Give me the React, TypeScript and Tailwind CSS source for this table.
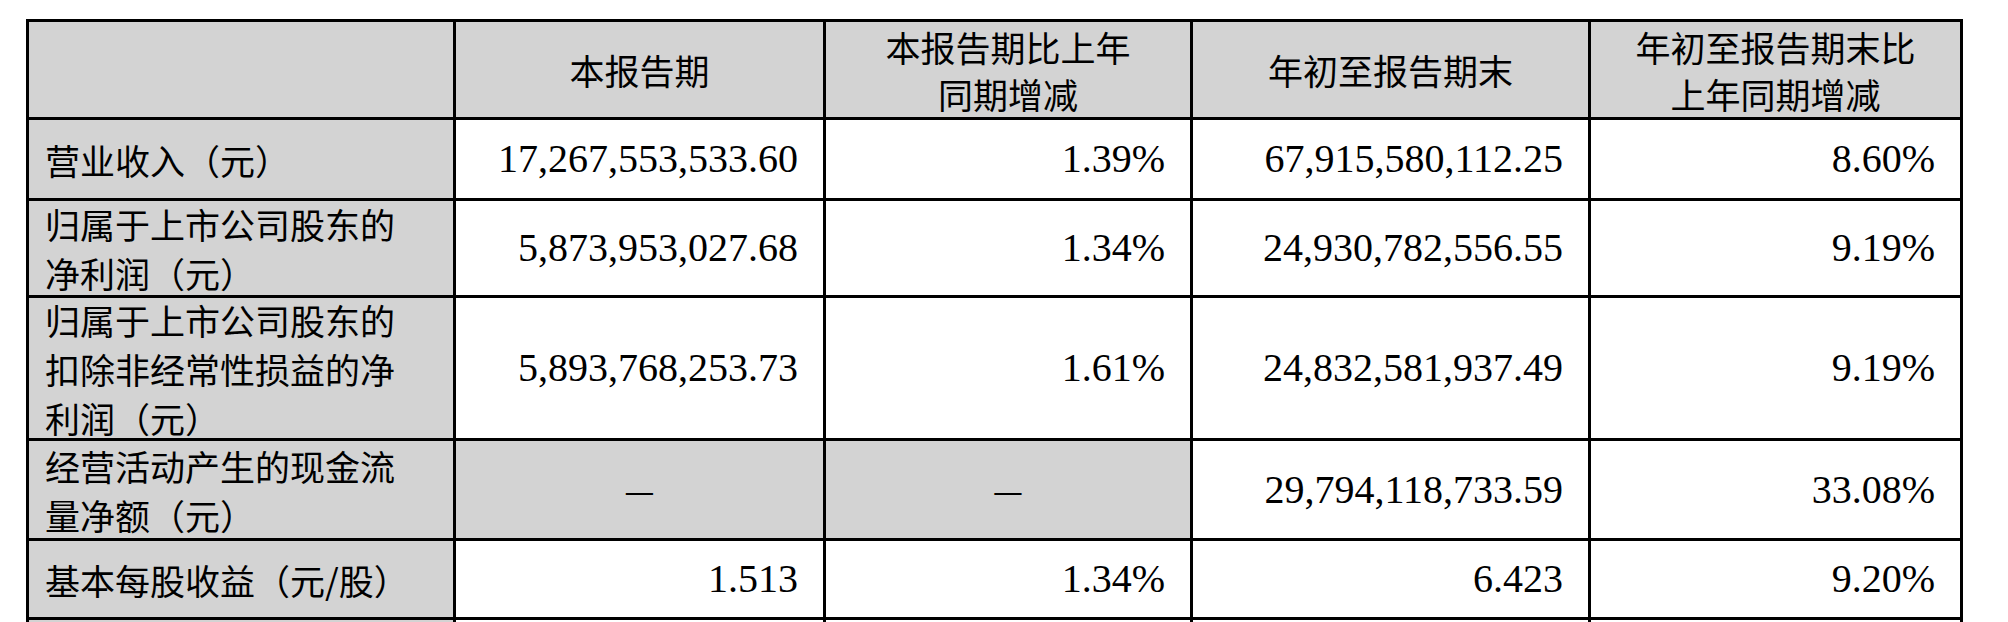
import React from 'react'

type Row = {
  label: string
  values: string[]
  grayCols?: number[]
}

const rows: Row[] = [
  { label: '营业收入（元）', values: ['17,267,553,533.60', '1.39%', '67,915,580,112.25', '8.60%'] },
  { label: '归属于上市公司股东的净利润（元）', values: ['5,873,953,027.68', '1.34%', '24,930,782,556.55', '9.19%'] },
  {
    label: '归属于上市公司股东的扣除非经常性损益的净利润（元）',
    values: ['5,893,768,253.73', '1.61%', '24,832,581,937.49', '9.19%']
  },
  {
    label: '经营活动产生的现金流量净额（元）',
    values: ['—', '—', '29,794,118,733.59', '33.08%'],
    grayCols: [0, 1]
  },
  { label: '基本每股收益（元/股）', values: ['1.513', '1.34%', '6.423', '9.20%'] }
]

const headers: React.ReactNode[] = [
  '本报告期',
  <>本报告期比上年<br />同期增减</>,
  '年初至报告期末',
  <>年初至报告期末比<br />上年同期增减</>
]

const App: React.FC = () => {
  return (
    <div className="w-[2008px] h-[622px] overflow-hidden bg-white pt-[19px] pl-[26px] text-black">
      <div className="grid w-[1937px] grid-cols-[424px_367px_364px_395px_369px] grid-rows-[95px_78px_94px_140px_97px_76px_80px] gap-[3px] border-[3px] border-black bg-black">
        {/* Header */}
        <div className="bg-[#d3d3d3]" />
        {headers.map((h, i) => (
          <div
            key={i}
            className="flex items-center justify-center bg-[#d3d3d3] text-center font-['Noto_Sans_CJK_SC',sans-serif] text-[35px] leading-[47px]"
          >
            <div>{h}</div>
          </div>
        ))}

        {/* Body */}
        {rows.map((row) => (
          <React.Fragment key={row.label}>
            <div className="flex items-center bg-[#d3d3d3] pl-[16px] pr-[38px] font-['Noto_Sans_CJK_SC',sans-serif] text-[35px] leading-[49px]">
              <div>{row.label}</div>
            </div>
            {row.values.map((v, i) =>
              v === '—' ? (
                <div
                  key={i}
                  className={`flex items-center justify-center font-['Noto_Sans_CJK_SC',sans-serif] text-[34px] ${
                    row.grayCols?.includes(i) ? 'bg-[#d3d3d3]' : 'bg-white'
                  }`}
                >
                  —
                </div>
              ) : (
                <div
                  key={i}
                  className="flex items-center justify-end bg-white pr-[25px] font-['Liberation_Serif','Noto_Sans_CJK_SC',serif] text-[40px] leading-none"
                >
                  {v}
                </div>
              )
            )}
          </React.Fragment>
        ))}

        {/* next row, cut off at the bottom */}
        <div className="bg-[#d3d3d3]" />
        <div className="bg-white" />
        <div className="bg-white" />
        <div className="bg-white" />
        <div className="bg-white" />
      </div>
    </div>
  )
}

export default App
